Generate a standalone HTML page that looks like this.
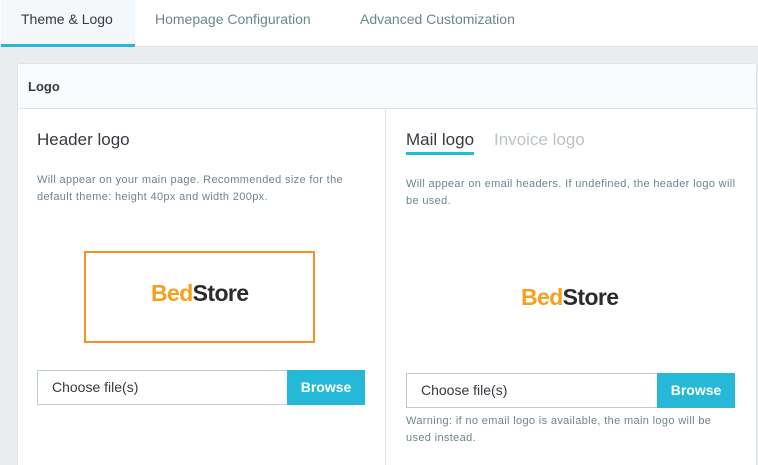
<html><head><style>
html,body{margin:0;width:758px;height:465px;overflow:hidden}
body{background:#eaedf0;font-family:"Liberation Sans",sans-serif;position:relative;color:#363a41}
.a{position:absolute}
.tabs{left:0;top:0;width:758px;height:46px;background:#fff;border-bottom:1px solid #dfe3e6}
.t{font-size:14px;color:#6c868e;top:11px}
.card{left:17px;top:63px;width:738px;height:401px;background:#fff;border:1px solid #dbe6e9;border-bottom:none;border-radius:4px 4px 0 0}
.hdr{left:0;top:0;width:738px;height:44px;background:#fafbfc;border-bottom:1px solid #dbe6e9}
.h{font-size:17px;color:#363a41}
.d{font-size:11px;color:#6c868e;line-height:17px;letter-spacing:0.35px}
.inp{border:1px solid #bbcdd2;background:#fff;font-size:14px;padding-left:14px;box-sizing:border-box}
.br{background:#25b9d7;color:#fff;font-weight:bold;font-size:14px;text-align:center;line-height:34px}
.logo{font-weight:bold;font-size:23px;letter-spacing:-0.6px}
</style></head><body>
<div class="a tabs"></div>
<div class="a" style="left:1px;top:0;width:134px;height:44px;background:#f4f8fb;border-bottom:3px solid #25b9d7"></div>
<div class="a t" style="left:21px;color:#363a41">Theme &amp; Logo</div>
<div class="a t" style="left:155px">Homepage Configuration</div>
<div class="a t" style="left:360px">Advanced Customization</div>
<div class="a card">
<div class="a hdr"></div>
<div class="a" style="left:10px;top:15px;font-size:13px;font-weight:bold">Logo</div>
<div class="a" style="left:367px;top:45px;width:1px;height:360px;background:#dbe6e9"></div>
</div>
<div class="a h" style="left:37px;top:130px">Header logo</div>
<div class="a d" style="left:37px;top:172px;width:325px">Will appear on your main page. Recommended size for the default theme: height 40px and width 200px.</div>
<div class="a" style="left:84px;top:251px;width:227px;height:88px;border:2px solid #f7902a"></div>
<div class="a logo" style="left:151px;top:280px"><span style="color:#f7a01b">Bed</span><span style="color:#2b2b2b">Store</span></div>
<div class="a inp" style="left:37px;top:370px;width:251px;height:35px;line-height:33px">Choose file(s)</div>
<div class="a br" style="left:287px;top:370px;width:78px;height:35px">Browse</div>
<div class="a h" style="left:406px;top:130px">Mail logo</div>
<div class="a" style="left:406px;top:152px;width:68px;height:3px;background:#25b9d7"></div>
<div class="a h" style="left:494px;top:130px;color:#bbc3c7">Invoice logo</div>
<div class="a d" style="left:406px;top:176px;width:330px">Will appear on email headers. If undefined, the header logo will be used.</div>
<div class="a logo" style="left:521px;top:284px"><span style="color:#f7a01b">Bed</span><span style="color:#2b2b2b">Store</span></div>
<div class="a inp" style="left:406px;top:373px;width:252px;height:35px;line-height:33px">Choose file(s)</div>
<div class="a br" style="left:657px;top:373px;width:78px;height:35px">Browse</div>
<div class="a d" style="left:406px;top:413px;width:328px">Warning: if no email logo is available, the main logo will be used instead.</div>
</body></html>
